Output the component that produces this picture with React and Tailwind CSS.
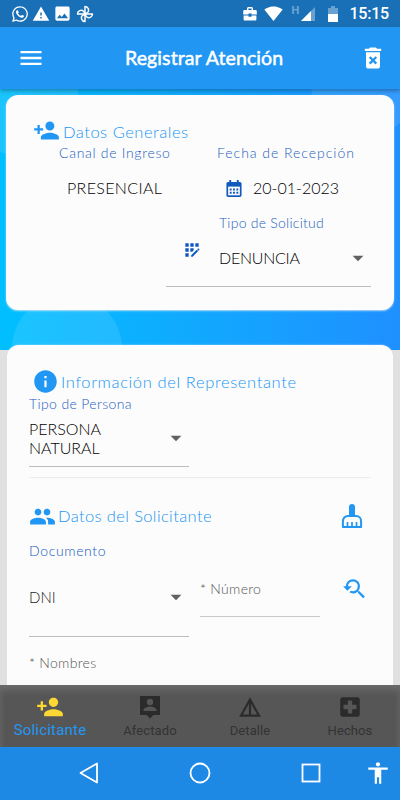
import React from "react";
import { FaWhatsapp } from "react-icons/fa";
import {
    MdAccessibility,
    MdAppRegistration,
    MdArrowDropDown,
    MdDeleteForever,
    MdDetails,
    MdImage,
    MdInfo,
    MdLocalHospital,
    MdMenu,
    MdPeople,
    MdPersonAdd,
    MdSignalWifi4Bar,
    MdWarning,
    MdYoutubeSearchedFor,
} from "react-icons/md";

function PinwheelIcon() {
    return (
        <svg viewBox="0 0 18 18" className="h-[18px] w-[18px]" fill="none" stroke="currentColor" strokeWidth="1.5" strokeLinejoin="round">
            <path d="M9 9V1.500a3.600 3.600 0 0 1 2.500 6.200z" />
            <path d="M9 9V1.500a3.600 3.600 0 0 1 2.500 6.200z" transform="rotate(90 9 9)" />
            <path d="M9 9V1.500a3.600 3.600 0 0 1 2.500 6.200z" transform="rotate(180 9 9)" />
            <path d="M9 9V1.500a3.600 3.600 0 0 1 2.500 6.200z" transform="rotate(270 9 9)" />
        </svg>
    );
}

function BriefcaseIcon() {
    return (
        <svg viewBox="0 0 14 16" className="h-4 w-3.5" fill="currentColor">
            <path d="M4 4V2.500C4 1.700 4.700 1 5.500 1h3C9.300 1 10 1.700 10 2.500V4h2.500c.8 0 1.300.6 1.300 1.300V8.500H8.500v-1h-3v1H.2V5.300C.2 4.600.7 4 1.500 4H4zm1.400 0h3.200V2.400H5.400V4zM.6 9.600h4.900v1.200h3V9.600h4.900v3.600c0 .8-.6 1.300-1.300 1.300H1.900c-.7 0-1.300-.5-1.300-1.300V9.600z" />
        </svg>
    );
}

function CalendarIcon() {
    return (
        <svg viewBox="0 0 16 18" className="h-[17px] w-4">
            <path d="M3 0h2v2h6V0h2v2h1.200c1 0 1.800.8 1.800 1.800v12.400c0 1-.8 1.800-1.800 1.800H1.800C.8 18 0 17.200 0 16.200V3.800C0 2.800.8 2 1.800 2H3z" fill="#1059bd" />
            <path d="M1.800 7h12.400v9.200H1.800z" fill="#fcfcfc" />
            <path d="M3.500 9h2v2h-2zM7 9h2v2H7zM10.500 9h2v2h-2zM3.500 12.500h2v2h-2zM7 12.500h2v2H7zM10.500 12.500h2v2h-2z" fill="#1059bd" />
        </svg>
    );
}

function BroomIcon() {
    return (
        <svg viewBox="0 0 22 26" className="h-[26px] w-[22px]" fill="none" stroke="currentColor" strokeWidth="2">
            <path d="M8 13V4a3 3 0 0 1 6 0v9z" fill="currentColor" stroke="none" />
            <path d="M1.900 24.100V18a5 5 0 0 1 5-5h8.200a5 5 0 0 1 5 5v6.100z" strokeLinejoin="round" />
            <path d="M6.500 24v-5M11 24v-5M15.500 24v-5" strokeWidth="1.700" />
        </svg>
    );
}

function PersonBadgeIcon({ className }) {
    return (
        <svg viewBox="0 0 26 26" className={className}>
            <path d="M3 2h20v19h-6.500L13 24.500 9.500 21H3z" fill="currentColor" />
            <circle cx="13" cy="8" r="3.200" fill="#565656" />
            <path d="M6.500 17v-1c0-2.300 4.300-3.500 6.500-3.500s6.500 1.200 6.500 3.500v1z" fill="#565656" />
        </svg>
    );
}

function StatusBar() {
    return (
        <div className="flex h-[27px] shrink-0 items-center bg-[#1a70b7] pr-[11px] pl-[11px] font-[Roboto] text-white">
            <FaWhatsapp className="h-[18px] w-[18px]" />
            <MdWarning className="ml-[3px] h-[18px] w-[18px]" />
            <MdImage className="ml-[3px] h-[19px] w-[19px]" />
            <div className="ml-[4px]">
                <PinwheelIcon />
            </div>
            <div className="ml-auto">
                <BriefcaseIcon />
            </div>
            <MdSignalWifi4Bar className="ml-[7px] h-[19px] w-[19px]" />
            <span className="mb-[4px] ml-[9px] text-[11px] font-bold text-[#6da5d4]">H</span>
            <svg viewBox="0 0 15 14" className="ml-px h-3.5 w-[15px]" fill="currentColor">
                <path d="M15 0v14H1z" opacity=".35" />
                <path d="M11 4v10H1z" />
            </svg>
            <svg viewBox="0 0 10 16" className="ml-[13px] h-4 w-2.5" fill="currentColor">
                <path d="M0 2h3V0h4v2h3v6H0z" opacity=".35" />
                <path d="M0 8h10v8H0z" />
            </svg>
            <span className="mt-px ml-[11px] text-[16px] font-medium tracking-[-0.2px]">15:15</span>
        </div>
    );
}

function Header() {
    return (
        <header className="z-10 flex h-[62px] shrink-0 items-center bg-[#2196f3] text-white shadow-[0_2px_4px_rgba(0,0,0,0.3)]">
            <MdMenu className="ml-[17px] h-7 w-7" />
            <h1 className="ml-[80px] text-[19.5px] font-normal tracking-[0.1px] whitespace-nowrap [-webkit-text-stroke:0.5px_white]">Registrar Atención</h1>
            <MdDeleteForever className="mr-[13px] ml-auto h-7 w-7" />
        </header>
    );
}

function GeneralCard() {
    return (
        <section className="mx-1.5 mt-1.5 h-[215px] shrink-0 rounded-xl bg-[#fcfcfc] shadow-[0_1px_2px_rgba(220,235,245,0.8)]">
            <div className="flex h-[49px] items-end pl-[27px] text-[#2196f3]">
                <MdPersonAdd className="h-[27px] w-[27px]" />
                <h2 className="mb-px ml-[3px] text-[16.5px] leading-[22px] tracking-[0.52px]">Datos Generales</h2>
            </div>
            <div className="flex h-[18px] items-center pb-[2px] text-[14px] text-[#2360bf]">
                <span className="w-[158px] pl-[53px] tracking-[0.7px] whitespace-nowrap">Canal de Ingreso</span>
                <span className="pl-[53px] tracking-[0.97px] whitespace-nowrap">Fecha de Recepción</span>
            </div>
            <div className="flex h-[52px] items-center text-[16px] text-black">
                <span className="w-[158px] pl-[61px] tracking-[0.35px]">PRESENCIAL</span>
                <div className="ml-[62px]">
                    <CalendarIcon />
                </div>
                <span className="ml-[11px]">20-01-2023</span>
            </div>
            <div className="flex h-[17px] items-center pl-[213px] text-[14px] text-[#2360bf]">
                <span className="tracking-[0.25px]">Tipo de Solicitud</span>
            </div>
            <div className="ml-[160px] flex h-[56px] w-[205px] border-b border-[#bdbdbd]">
                <MdAppRegistration className="mt-[9px] ml-[16px] h-5 w-5 text-[#0d56c4]" />
                <span className="mt-[15px] ml-[17px] text-[16px] tracking-[-0.25px] text-black">DENUNCIA</span>
                <MdArrowDropDown className="mt-[14px] ml-auto h-[26px] w-[26px] text-[#616161]" />
            </div>
        </section>
    );
}

function ApplicantCard() {
    return (
        <section className="mx-[7px] mt-[35px] h-[400px] shrink-0 rounded-t-xl bg-[#fcfcfc] px-[22px] shadow-[0_0_2px_rgba(220,235,245,0.8)]">
            <div className="flex h-[50px] items-end pl-[3px] text-[#2196f3]">
                <MdInfo className="h-[27px] w-[27px]" />
                <h2 className="mb-[2px] ml-[2px] text-[16.5px] leading-[22px] tracking-[0.63px]">Información del Representante</h2>
            </div>
            <div className="flex h-[16px] items-center text-[14px] text-[#2360bf]">
                <span className="tracking-[0.37px]">Tipo de Persona</span>
            </div>
            <div className="flex h-[56px] w-[160px] items-center justify-between border-b border-[#bdbdbd] pb-[2px] text-[16px] leading-[19px] text-black">
                <span className="w-[90px]">PERSONA NATURAL</span>
                <MdArrowDropDown className="h-[26px] w-[26px] text-[#616161]" />
            </div>
            <div className="h-[11px] w-[342px] border-b border-[#ececec]" />
            <div className="flex h-[76px] items-center text-[#2196f3]">
                <MdPeople className="h-[27px] w-[27px]" />
                <h2 className="ml-[2px] text-[16.5px] tracking-[0.38px]">Datos del Solicitante</h2>
                <div className="mr-[8px] ml-auto">
                    <BroomIcon />
                </div>
            </div>
            <div className="-mt-[12px] flex h-[18px] items-center pb-[2px] text-[14px] text-[#1558bd]">
                <span className="tracking-[0.65px]">Documento</span>
            </div>
            <div className="flex h-[77px]">
                <div className="flex w-[160px] items-center justify-between border-b border-[#bdbdbd] text-[15px] text-[#222]">
                    <span className="mb-px">DNI</span>
                    <MdArrowDropDown className="mb-[3px] h-[26px] w-[26px] text-[#616161]" />
                </div>
                <div className="ml-[11px] h-[57px] w-[120px] border-b border-[#c9c9c9] pt-[18px] text-[14px] text-[#555]">
                    <span className="tracking-[0.3px]">* Número</span>
                </div>
                <MdYoutubeSearchedFor className="mt-[16px] ml-[21px] h-[26px] w-[26px] text-[#2196f3]" />
            </div>
            <div className="pt-[15px] text-[14px] text-[#555]">
                <span className="tracking-[0.3px]">* Nombres</span>
            </div>
        </section>
    );
}

const tabs = [
    { label: "Afectado", Icon: PersonBadgeIcon },
    { label: "Detalle", Icon: MdDetails },
    { label: "Hechos", Icon: MdLocalHospital },
];

function TabBar() {
    return (
        <nav className="grid h-[62px] shrink-0 grid-cols-4 bg-[#565656] font-[Roboto] font-normal text-[#2b2b2b] shadow-[inset_0_5px_6px_#6c6c6c]">
            <div className="flex flex-col items-center pt-[8px]">
                <MdPersonAdd className="h-7 w-7 text-[#fdd835]" />
                <span className="text-[15px] leading-[18px] tracking-[0.2px] text-[#2196f3]">Solicitante</span>
            </div>
            {tabs.map(({ label, Icon }) => (
                <div key={label} className="flex flex-col items-center pt-[9px]">
                    <Icon className="h-[26px] w-[26px]" />
                    <span className="mt-[2px] text-[13px] leading-[18px] tracking-[0.1px] text-[#333]">{label}</span>
                </div>
            ))}
        </nav>
    );
}

function SystemNav() {
    return (
        <div className="flex h-[53px] shrink-0 items-center bg-[#1e88e5] pb-px pl-[79px] text-white">
            <svg viewBox="0 0 20 22" className="h-[22px] w-5" fill="none" stroke="currentColor" strokeWidth="1.8" strokeLinejoin="round">
                <path d="M18 1.500v19L1.500 11z" />
            </svg>
            <svg viewBox="0 0 22 22" className="ml-[90px] h-[22px] w-[22px]" fill="none" stroke="currentColor" strokeWidth="1.8">
                <circle cx="11" cy="11" r="9.500" />
            </svg>
            <svg viewBox="0 0 20 20" className="ml-[90px] h-5 w-5" fill="none" stroke="currentColor" strokeWidth="1.8">
                <rect x="1.500" y="1.500" width="17" height="17" />
            </svg>
            <MdAccessibility className="ml-[44px] h-[26px] w-[26px]" />
        </div>
    );
}

function App() {
    return (
        <div className="flex h-[800px] w-[400px] flex-col overflow-hidden bg-[#e0e0e0] font-[Lato,sans-serif] font-light">
            <StatusBar />
            <Header />
            <main className="relative isolate flex min-h-0 flex-1 flex-col overflow-hidden">
                {/* decorative backdrop behind the cards */}
                <div className="absolute inset-x-0 top-0 -z-10 h-[261px] overflow-hidden bg-linear-to-r from-[#00bfff] to-[#1e90ff]">
                    <div className="absolute -top-[54px] -left-[42px] h-[120px] w-[120px] rounded-full bg-white/10" />
                    <div className="absolute -top-[58px] left-[311px] h-[106px] w-[106px] rounded-full bg-white/10" />
                    <div className="absolute top-[205px] left-[12px] h-[110px] w-[110px] rounded-full bg-white/10" />
                </div>
                <GeneralCard />
                <ApplicantCard />
            </main>
            <TabBar />
            <SystemNav />
        </div>
    );
}

export default App;
